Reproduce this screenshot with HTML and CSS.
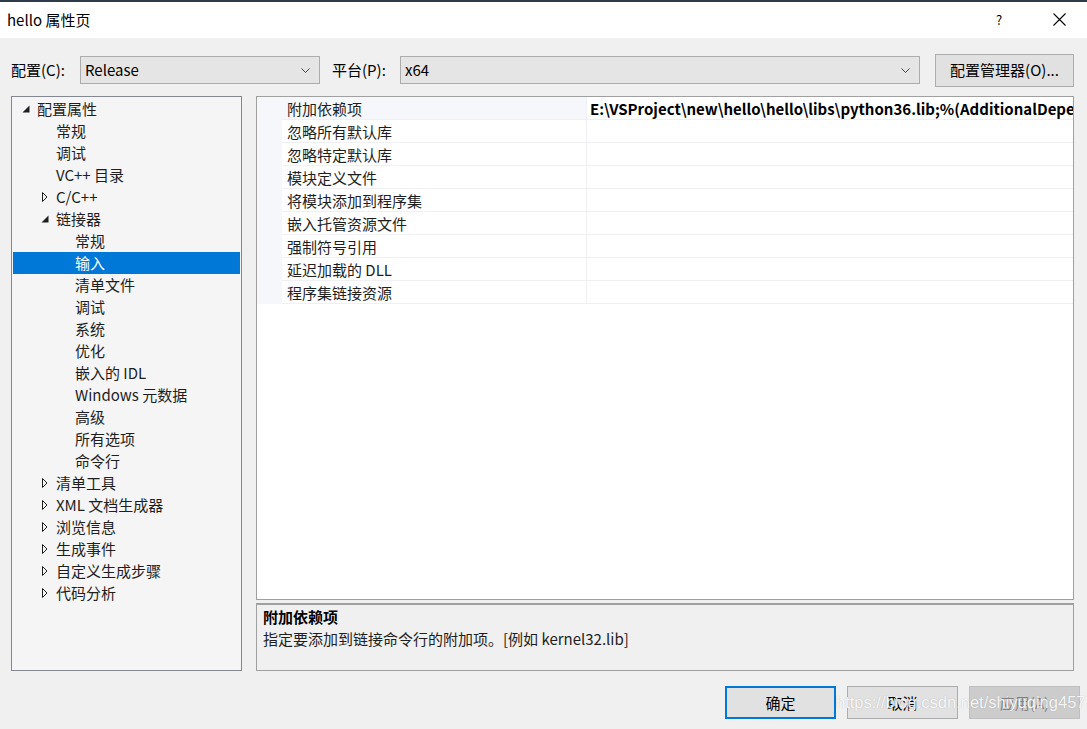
FILE: index.html
```html
<!DOCTYPE html>
<html lang="zh-CN">
<head>
<meta charset="utf-8">
<title>hello 属性页</title>
<link rel="stylesheet" href="styles.css">
</head>
<body>
<div class="window">
  <div class="titlebar">
    <span class="title">hello 属性页</span>
    <span class="help">?</span>
    <span class="close"><svg width="13" height="13" viewBox="0 0 13 13"><path d="M0.5 0.5 L12.5 12.5 M12.5 0.5 L0.5 12.5" stroke="#000" stroke-width="1.1" fill="none"/></svg></span>
  </div>

  <div class="config">
    <span class="label lbl-config">配置(C):</span>
    <div class="combo combo-config"><span>Release</span><svg class="chev" width="9" height="5" viewBox="0 0 9 5"><path d="M0.5 0.5 L4.5 4.5 L8.5 0.5" stroke="#444" stroke-width="1" fill="none"/></svg></div>
    <span class="label lbl-platform">平台(P):</span>
    <div class="combo combo-platform"><span>x64</span><svg class="chev" width="9" height="5" viewBox="0 0 9 5"><path d="M0.5 0.5 L4.5 4.5 L8.5 0.5" stroke="#444" stroke-width="1" fill="none"/></svg></div>
    <button class="btn btn-manager">配置管理器(O)...</button>
  </div>

  <div class="main">
    <div class="tree">
      <div class="row l0"><span class="arrow"><svg width="8" height="8" viewBox="0 0 8 8"><path d="M7.5 0.5 L7.5 7.5 L0.5 7.5 Z" fill="#1e1e1e"/></svg></span><span>配置属性</span></div>
      <div class="row l1"><span class="arrow"></span><span>常规</span></div>
      <div class="row l1"><span class="arrow"></span><span>调试</span></div>
      <div class="row l1"><span class="arrow"></span><span>VC++ 目录</span></div>
      <div class="row l1"><span class="arrow"><svg width="8" height="10" viewBox="0 0 8 10"><path d="M1.5 0.5 L6 5 L1.5 9.5 Z" fill="none" stroke="#1e1e1e" stroke-width="1"/></svg></span><span>C/C++</span></div>
      <div class="row l1"><span class="arrow"><svg width="8" height="8" viewBox="0 0 8 8"><path d="M7.5 0.5 L7.5 7.5 L0.5 7.5 Z" fill="#1e1e1e"/></svg></span><span>链接器</span></div>
      <div class="row l2"><span class="arrow"></span><span>常规</span></div>
      <div class="row l2 selected"><span class="arrow"></span><span>输入</span></div>
      <div class="row l2"><span class="arrow"></span><span>清单文件</span></div>
      <div class="row l2"><span class="arrow"></span><span>调试</span></div>
      <div class="row l2"><span class="arrow"></span><span>系统</span></div>
      <div class="row l2"><span class="arrow"></span><span>优化</span></div>
      <div class="row l2"><span class="arrow"></span><span>嵌入的 IDL</span></div>
      <div class="row l2"><span class="arrow"></span><span>Windows 元数据</span></div>
      <div class="row l2"><span class="arrow"></span><span>高级</span></div>
      <div class="row l2"><span class="arrow"></span><span>所有选项</span></div>
      <div class="row l2"><span class="arrow"></span><span>命令行</span></div>
      <div class="row l1"><span class="arrow"><svg width="8" height="10" viewBox="0 0 8 10"><path d="M1.5 0.5 L6 5 L1.5 9.5 Z" fill="none" stroke="#1e1e1e" stroke-width="1"/></svg></span><span>清单工具</span></div>
      <div class="row l1"><span class="arrow"><svg width="8" height="10" viewBox="0 0 8 10"><path d="M1.5 0.5 L6 5 L1.5 9.5 Z" fill="none" stroke="#1e1e1e" stroke-width="1"/></svg></span><span>XML 文档生成器</span></div>
      <div class="row l1"><span class="arrow"><svg width="8" height="10" viewBox="0 0 8 10"><path d="M1.5 0.5 L6 5 L1.5 9.5 Z" fill="none" stroke="#1e1e1e" stroke-width="1"/></svg></span><span>浏览信息</span></div>
      <div class="row l1"><span class="arrow"><svg width="8" height="10" viewBox="0 0 8 10"><path d="M1.5 0.5 L6 5 L1.5 9.5 Z" fill="none" stroke="#1e1e1e" stroke-width="1"/></svg></span><span>生成事件</span></div>
      <div class="row l1"><span class="arrow"><svg width="8" height="10" viewBox="0 0 8 10"><path d="M1.5 0.5 L6 5 L1.5 9.5 Z" fill="none" stroke="#1e1e1e" stroke-width="1"/></svg></span><span>自定义生成步骤</span></div>
      <div class="row l1"><span class="arrow"><svg width="8" height="10" viewBox="0 0 8 10"><path d="M1.5 0.5 L6 5 L1.5 9.5 Z" fill="none" stroke="#1e1e1e" stroke-width="1"/></svg></span><span>代码分析</span></div>
    </div>

    <div class="right">
      <div class="grid">
        <div class="prow active"><span class="gutter"></span><span class="pname">附加依赖项</span><span class="pval">E:\VSProject\new\hello\hello\libs\python36.lib;%(AdditionalDependencies)</span></div>
        <div class="prow"><span class="gutter"></span><span class="pname">忽略所有默认库</span><span class="pval"></span></div>
        <div class="prow"><span class="gutter"></span><span class="pname">忽略特定默认库</span><span class="pval"></span></div>
        <div class="prow"><span class="gutter"></span><span class="pname">模块定义文件</span><span class="pval"></span></div>
        <div class="prow"><span class="gutter"></span><span class="pname">将模块添加到程序集</span><span class="pval"></span></div>
        <div class="prow"><span class="gutter"></span><span class="pname">嵌入托管资源文件</span><span class="pval"></span></div>
        <div class="prow"><span class="gutter"></span><span class="pname">强制符号引用</span><span class="pval"></span></div>
        <div class="prow"><span class="gutter"></span><span class="pname">延迟加载的 DLL</span><span class="pval"></span></div>
        <div class="prow"><span class="gutter"></span><span class="pname">程序集链接资源</span><span class="pval"></span></div>
      </div>
      <div class="desc">
        <div class="desc-title">附加依赖项</div>
        <div class="desc-text">指定要添加到链接命令行的附加项。[例如 kernel32.lib]</div>
      </div>
    </div>
  </div>

  <div class="footer">
    <button class="btn btn-ok">确定</button>
    <button class="btn btn-cancel">取消</button>
    <button class="btn btn-apply">应用(A)</button>
    <span class="watermark">https://blog.csdn.net/shiyuqing457</span>
  </div>
</div>
</body>
</html>
```

FILE: styles.css
```css
* { box-sizing: border-box; }
html, body {
  margin: 0;
  padding: 0;
}
body {
  width: 1087px;
  height: 729px;
  overflow: hidden;
  background: #f0f0f0;
  font-family: "Noto Sans CJK SC", "Noto Sans", sans-serif;
  font-size: 15px;
  color: #000;
}
.window {
  position: relative;
  width: 1087px;
  height: 729px;
}
.titlebar {
  height: 38px;
  background: #fff;
  border-top: 2px solid #2c3a4a;
  display: flex;
  align-items: center;
  padding-left: 7px;
  padding-bottom: 1px;
}
.title {
  flex: 1;
  font-size: 15px;
  line-height: 20px;
}
.help {
  width: 14px;
  font-size: 13px;
  margin-right: 43px;
  line-height: 16px;
}
.close {
  display: flex;
  width: 34px;
  align-items: center;
}
.config {
  height: 58px;
  padding-top: 6px;
  display: flex;
  align-items: center;
  padding-left: 11px;
}
.label {
  line-height: 20px;
}
.lbl-config { width: 69px; }
.lbl-platform { width: 68px; }
.combo {
  height: 28px;
  background: #e5e5e5;
  border: 1px solid #acacac;
  display: flex;
  align-items: center;
  justify-content: space-between;
  padding: 0 9px 0 4px;
  line-height: 20px;
}
.combo-config { width: 240px; margin-right: 12px; }
.combo-platform { width: 520px; }
.chev { margin-top: 1px; }
.btn {
  font-family: "Noto Sans CJK SC", "Noto Sans", sans-serif;
  font-size: 15px;
  color: #000;
  background: #e1e1e1;
  border: 1px solid #adadad;
  padding: 0;
  height: 33px;
  line-height: 20px;
}
.btn-manager {
  width: 139px;
  margin-left: 15px;
}
.main {
  display: flex;
  padding-left: 11px;
  gap: 14px;
  height: 575px;
}
.tree {
  width: 231px;
  height: 575px;
  border: 1px solid #828790;
  background: #f5f5f5;
  padding: 1px 1px 0 1px;
}
.row {
  height: 22px;
  display: flex;
  align-items: center;
  line-height: 20px;
  color: #1e1e1e;
  white-space: nowrap;
}
.row.l0 { padding-left: 2px; }
.row.l1 { padding-left: 21px; }
.row.l2 { padding-left: 40px; }
.arrow {
  width: 22px;
  height: 22px;
  display: flex;
  align-items: center;
  padding-left: 7px;
}
.row.selected {
  background: #0078d7;
  color: #fff;
}
.right {
  width: 818px;
  display: flex;
  flex-direction: column;
  gap: 3px;
}
.grid {
  height: 505px;
  border: 1px solid #a0a0a0;
  background: #fff;
  overflow: hidden;
}
.prow {
  display: flex;
  height: 23px;
}
.gutter {
  width: 25px;
  background: #f5f7fa;
  flex: none;
}
.pname {
  width: 305px;
  flex: none;
  border-right: 1px solid #f0f0f4;
  border-bottom: 1px solid #f0f0f4;
  padding-left: 5px;
  padding-top: 1px;
  line-height: 22px;
  white-space: nowrap;
  color: #1e1e1e;
}
.pval {
  flex: 1;
  border-bottom: 1px solid #f0f0f4;
  padding-left: 3px;
  padding-top: 1px;
  line-height: 22px;
  font-weight: bold;
  white-space: nowrap;
  overflow: hidden;
  color: #000;
}
.prow.active .pname { background: #f5f7fb; }
.desc {
  height: 68px;
  border: 1px solid #a0a0a0;
  border-top-width: 2px;
  background: #f0f0f0;
  padding: 1px 0 0 6px;
}
.desc-title {
  font-weight: bold;
  line-height: 22px;
}
.desc-text {
  line-height: 22px;
  color: #1e1e1e;
}
.footer {
  position: relative;
  display: flex;
  padding: 15px 0 0 725px;
  gap: 11px;
}
.footer .btn { width: 111px; }
.btn-ok { border: 2px solid #0078d7; }
.btn-apply {
  background: #cccccc;
  border-color: #bfbfbf;
  color: #838383;
}
.watermark {
  position: absolute;
  left: 836px;
  top: 20px;
  font-family: "Liberation Sans", Arial, sans-serif;
  font-size: 16.5px;
  line-height: 22px;
  color: rgba(255, 255, 255, 0.9);
  text-shadow: 0 0 1px rgba(110, 110, 110, 0.45);
  white-space: nowrap;
}
```
